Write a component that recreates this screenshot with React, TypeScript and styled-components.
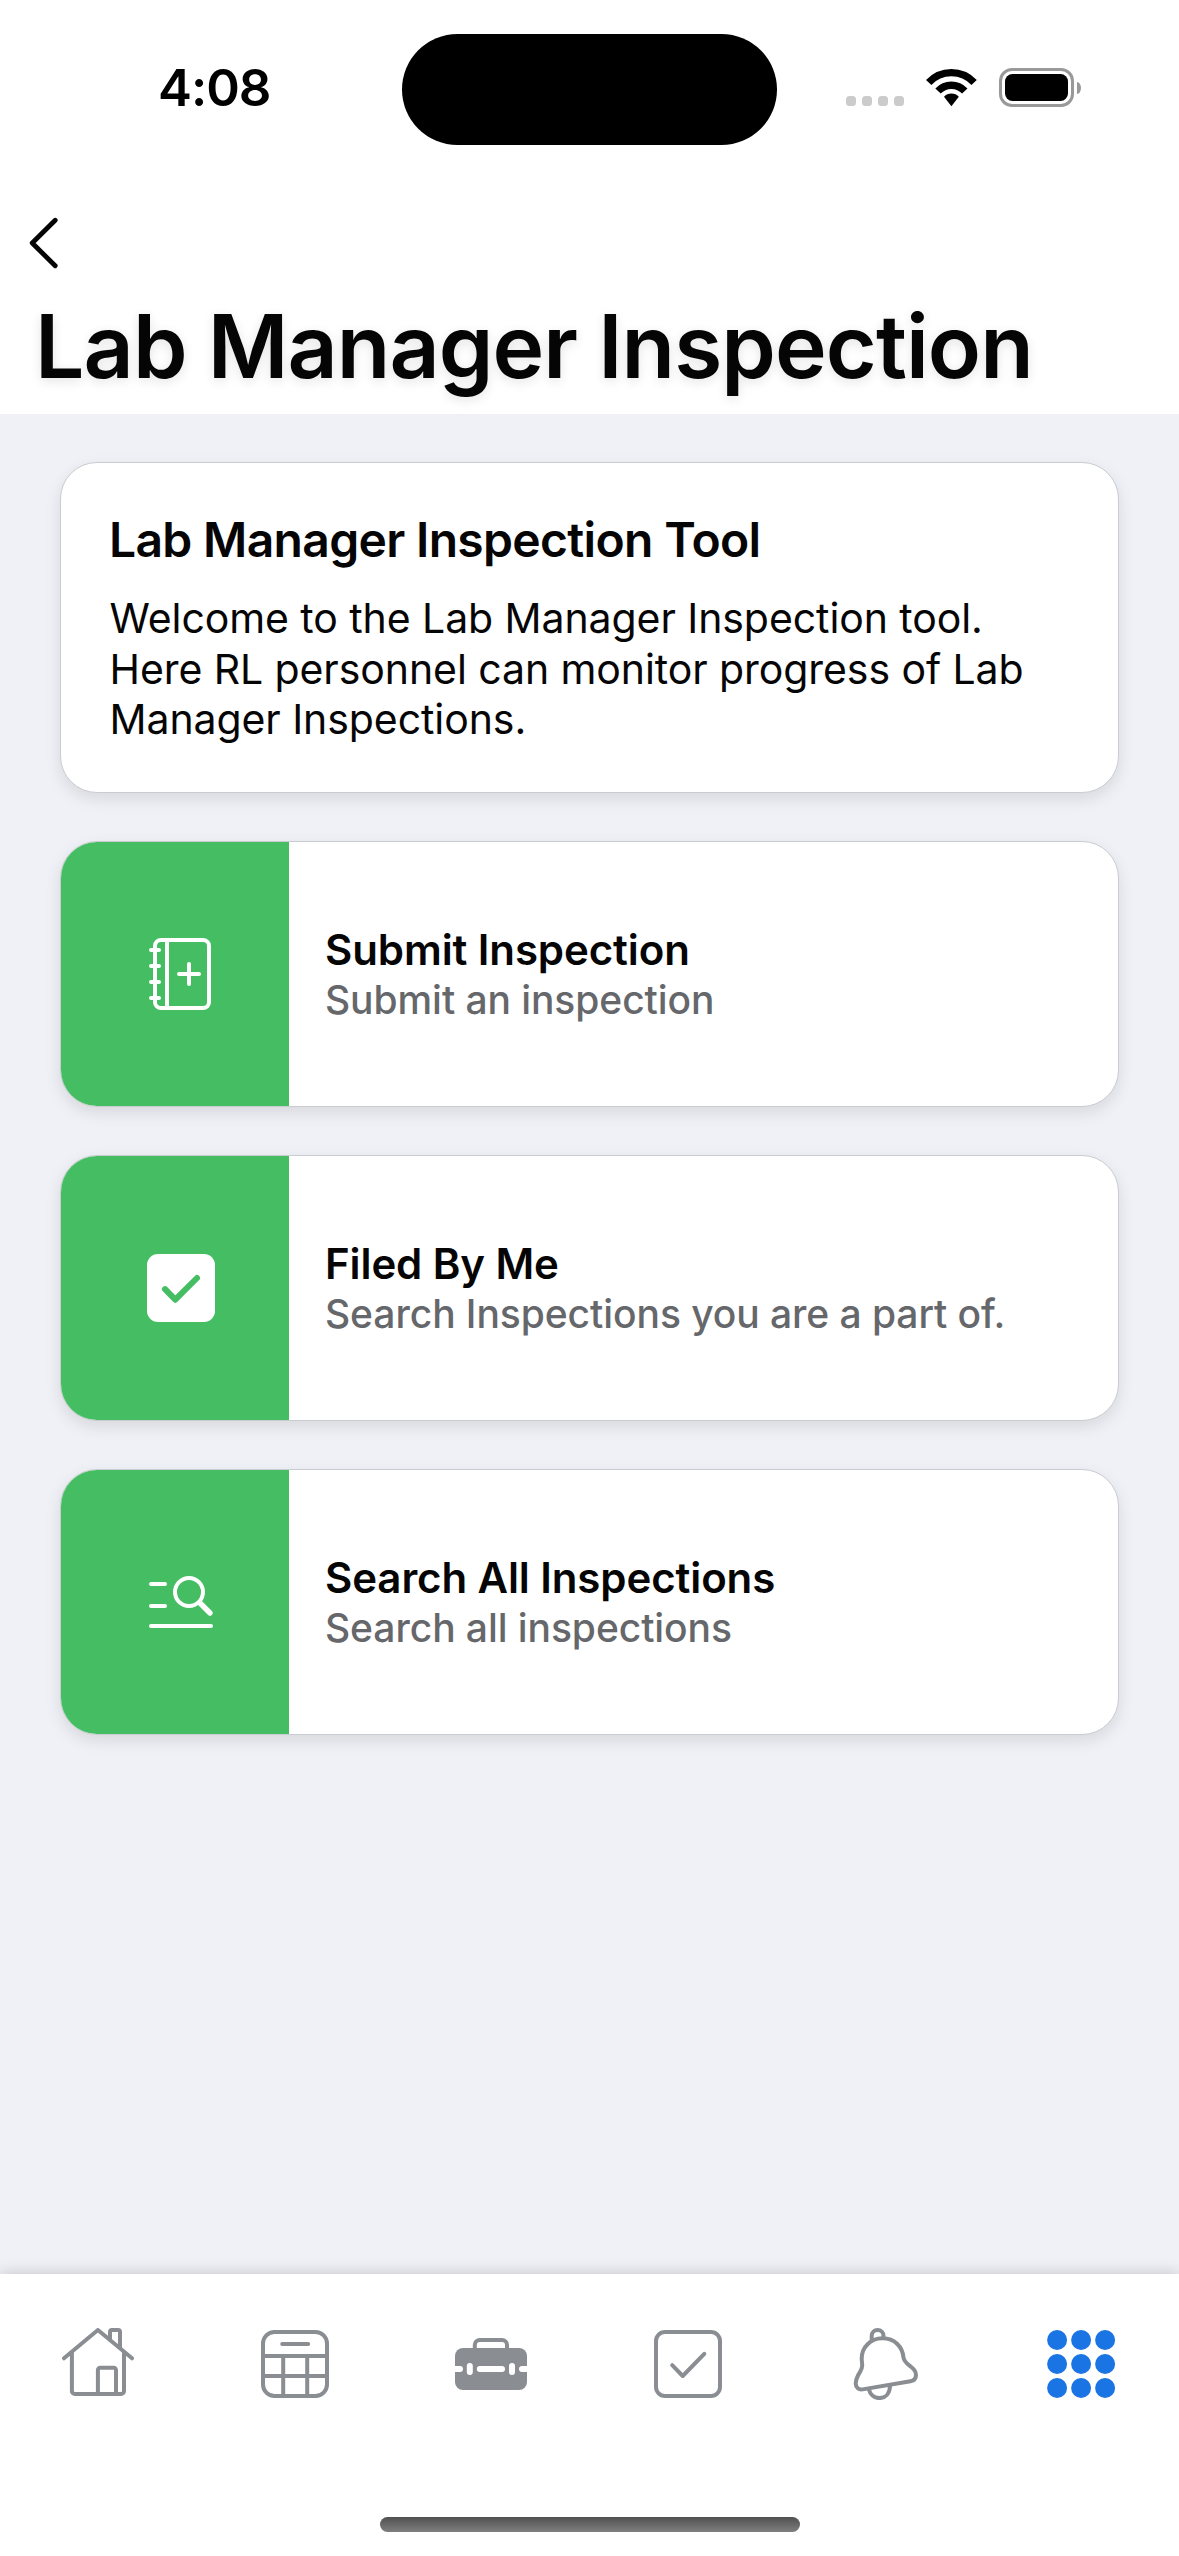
import React from "react";
import styled, { createGlobalStyle } from "styled-components";

const color = {
  ink: "#050505",
  muted: "#65676b",
  green: "#45bd62",
  gray: "#8a8d91",
  blue: "#1b74e4",
  canvas: "#f0f1f6",
  border: "#c9ccd1",
};

const GlobalStyle = createGlobalStyle`
  * { box-sizing: border-box; }
  body { margin: 0; background: #fff; }
`;

const Screen = styled.div`
  width: 1179px;
  height: 2556px;
  display: flex;
  flex-direction: column;
  overflow: hidden;
  background: ${color.canvas};
  color: ${color.ink};
  font-family: Inter, "Liberation Sans", sans-serif;
`;

/* Status bar */

const StatusBar = styled.div`
  height: 177px;
  display: grid;
  grid-template-columns: 402px 375px 1fr;
  align-items: center;
  background: #fff;
`;

const Clock = styled.div`
  padding: 0 0 1px 158px;
  font-size: 51px;
  font-weight: 600;
  line-height: 60px;
  letter-spacing: -1px;
  color: #000;
`;

const Island = styled.div`
  height: 111px;
  margin-top: 1px;
  border-radius: 56px;
  background: #000;
`;

const StatusIcons = styled.div`
  display: flex;
  align-items: center;
  gap: 22px;
  height: 39px;
  margin-bottom: 2px;
  padding-left: 69px;
`;

const SignalDots = styled.div`
  display: flex;
  gap: 6px;
  align-self: flex-end;
  margin-bottom: 1px;
`;

const SignalDot = styled.span`
  width: 10px;
  height: 10px;
  border-radius: 3.5px;
  background: #cbcbcb;
`;

const BatteryGroup = styled.div`
  display: flex;
  align-items: center;
  gap: 3px;
`;

const BatteryShell = styled.div`
  width: 75px;
  height: 39px;
  padding: 3px;
  border: 3px solid #999;
  border-radius: 13px;
`;

const BatteryLevel = styled.div`
  height: 100%;
  border-radius: 7.5px;
  background: #000;
`;

const BatteryNub = styled.div`
  width: 4px;
  height: 12px;
  border-radius: 0 4px 4px 0 / 0 6px 6px 0;
  background: #999;
`;

/* Header */

const Header = styled.header`
  background: #fff;
  height: 237px;
`;

const NavRow = styled.div`
  height: 132px;
  display: flex;
  align-items: center;
  padding-left: 28px;
`;

const BackButton = styled.button`
  display: flex;
  padding: 0;
  border: 0;
  background: none;
`;

const PageTitle = styled.h1`
  margin: 0;
  padding-left: 35px;
  font-size: 87.5px;
  font-weight: 600;
  line-height: 75px;
  letter-spacing: -0.92px;
  white-space: nowrap;
  text-shadow: 0 3px 12px rgba(0, 0, 0, 0.11);
`;

/* Content */

const Content = styled.main`
  flex: 1;
  display: flex;
  flex-direction: column;
  gap: 48px;
  padding: 48px 60px;
`;

const Card = styled.section`
  background: #fff;
  border: 1px solid ${color.border};
  border-radius: 37px;
  box-shadow: 0 6px 16px rgba(0, 0, 0, 0.1);
`;

const IntroCard = styled(Card)`
  height: 331px;
  padding: 48px;
`;

const IntroTitle = styled.h2`
  margin: 0 0 25px;
  font-size: 48px;
  font-weight: 600;
  line-height: 57px;
  letter-spacing: -0.67px;
`;

const IntroText = styled.p`
  margin: 0;
  padding-left: 0.5px;
  max-width: 940px;
  font-size: 41px;
  line-height: 50.7px;
  letter-spacing: -0.08px;
`;

const ActionCard = styled(Card)`
  display: flex;
  height: 266px;
  overflow: hidden;
`;

const ActionIcon = styled.div`
  width: 228px;
  display: flex;
  align-items: center;
  justify-content: flex-end;
  padding-right: 72px;
  background: ${color.green};
`;

const ActionBody = styled.div`
  flex: 1;
  display: flex;
  flex-direction: column;
  justify-content: center;
  padding-left: 36px;
`;

const ActionTitle = styled.div`
  font-size: 42px;
  font-weight: 600;
  line-height: 51px;
  letter-spacing: -0.1px;
`;

const ActionNote = styled.div`
  font-size: 39px;
  font-weight: 500;
  line-height: 49px;
  letter-spacing: -0.07px;
  color: ${color.muted};
`;

/* Tab bar */

const TabBar = styled.nav`
  height: 282px;
  display: flex;
  flex-direction: column;
  justify-content: space-between;
  align-items: center;
  padding: 54px 0 24px;
  background: #fff;
  box-shadow: 0 0 15px rgba(0, 0, 0, 0.2);
`;

const Tabs = styled.div`
  width: 100%;
  display: grid;
  grid-template-columns: repeat(6, 1fr);
  justify-items: center;
`;

const Tab = styled.button<{ $active?: boolean }>`
  display: flex;
  padding: 0;
  border: 0;
  background: none;
  color: ${(p) => (p.$active ? color.blue : color.gray)};
`;

const HomeIndicator = styled.div`
  width: 420px;
  height: 15px;
  border-radius: 8px;
  background: linear-gradient(#505050, #7f7f7f);
`;

/* Icons */

const Glyph = styled.svg`
  display: block;
  width: 72px;
  height: 72px;
  fill: none;
  stroke: currentColor;
  stroke-width: 4;
  stroke-linecap: round;
  stroke-linejoin: round;
`;

const WhiteGlyph = styled(Glyph)`
  color: #fff;
`;

const WifiIcon = () => (
  <svg width="51" height="39" viewBox="0 0 51 39" fill="none" stroke="#000" strokeWidth="7.3">
    <path d="M2.7 14.5A31 31 0 0 1 48.1 14.5" />
    <path d="M12 23.1A18.3 18.3 0 0 1 38.8 23.1" />
    <path d="M18 28.7A10.2 10.2 0 0 1 32.8 28.7L25.4 38.2Z" fill="#000" stroke="none" />
  </svg>
);

const BackIcon = () => (
  <svg
    width="32"
    height="52"
    viewBox="0 0 32 52"
    fill="none"
    stroke={color.ink}
    strokeWidth="4.8"
    strokeLinecap="round"
    strokeLinejoin="round"
  >
    <path d="M27.2 3.2L4.2 26L27.2 48.8" />
  </svg>
);

const NotebookIcon = () => (
  <WhiteGlyph viewBox="0 0 72 72">
    <rect x="10" y="2" width="54" height="68" rx="6" />
    <path d="M22 2V70" />
    <path d="M6 12H14M6 28H14M6 44H14M6 60H14" />
    <path d="M44 26V46M34 36H54" />
  </WhiteGlyph>
);

const CheckFilledIcon = () => (
  <WhiteGlyph viewBox="0 0 72 72">
    <rect x="2" y="2" width="68" height="68" rx="11" fill="currentColor" stroke="none" />
    <path d="M20 37.2L30.3 47.7L52 26" stroke={color.green} strokeWidth="6" />
  </WhiteGlyph>
);

const SearchListIcon = () => (
  <WhiteGlyph viewBox="0 0 72 72">
    <path d="M6 18H20M6 40H20M6 60H66" />
    <circle cx="44" cy="26" r="14" />
    <path d="M55 37L65 47" strokeWidth="5.4" />
  </WhiteGlyph>
);

const HouseIcon = () => (
  <Glyph viewBox="0 0 72 72">
    <path d="M2 30.3L35.9 2L70 30.3" />
    <path d="M9.9 25V63a3 3 0 0 0 3 3H59a3 3 0 0 0 3 -3V25" />
    <path d="M35.9 65V42a2.3 2.3 0 0 1 2.3 -2.3H51.7A2.3 2.3 0 0 1 54 42V65" />
    <path d="M48 11V4a2 2 0 0 1 2 -2H56a2 2 0 0 1 2 2V19.5" />
  </Glyph>
);

const TableIcon = () => (
  <Glyph viewBox="0 0 72 72">
    <rect x="4" y="4" width="64" height="64" rx="11.5" />
    <path d="M4 28H68M4 48H68M24.2 28V68M48.2 28V68" />
    <path d="M23.2 16H49.2" />
  </Glyph>
);

const ToolboxIcon = () => (
  <Glyph viewBox="0 0 72 72">
    <path d="M19.8 21V17a5 5 0 0 1 5 -5H47a5 5 0 0 1 5 5V21" />
    <rect x="0" y="20" width="72" height="42" rx="8" fill="currentColor" stroke="none" />
    <g stroke="#fff" strokeWidth="6">
      <path d="M-4 41H5M67 41H76M24.8 41H47" />
      <path d="M14.8 38V44M57 38V44" />
    </g>
  </Glyph>
);

const CheckSquareIcon = () => (
  <Glyph viewBox="0 0 72 72">
    <rect x="4" y="4" width="64" height="64" rx="9" />
    <path d="M20.2 37.2L30.7 48L52.3 25.8" />
  </Glyph>
);

const BellIcon = () => (
  <Glyph viewBox="0 0 72 72">
    <path d="M34.4 10.3C22.5 10.3 13.7 19.5 13.7 30.5C13.7 33 14.2 35 14.2 37.5C14.2 42 12 43.5 10 47.5C8.4 50.6 7.7 52.5 7.7 55.5C7.7 59.7 10.8 62 14.5 61.4L62.5 53.2C66 52.6 68 50.3 68 47C68 43.5 66 41.2 63 38.8C59 35.6 56 33.8 55.5 29.5C54.5 19 47 10.3 34.4 10.3Z" />
    <path d="M23.7 12.2V7.9a5.9 5.9 0 0 1 11.8 0V10" />
    <path d="M20.8 61C22 66.2 26 70.1 31.2 70.1C37.4 70.1 41.8 65.6 42 58" />
  </Glyph>
);

const GridIcon = () => (
  <Glyph viewBox="0 0 72 72">
    <g fill="currentColor" stroke="none">
      {[12, 36, 60].map((y) =>
        [12.1, 36.1, 60.1].map((x) => <circle key={`${x}-${y}`} cx={x} cy={y} r="10" />)
      )}
    </g>
  </Glyph>
);

const actions = [
  { title: "Submit Inspection", note: "Submit an inspection", Icon: NotebookIcon },
  { title: "Filed By Me", note: "Search Inspections you are a part of.", Icon: CheckFilledIcon },
  { title: "Search All Inspections", note: "Search all inspections", Icon: SearchListIcon },
];

const tabs = [
  { name: "Home", Icon: HouseIcon },
  { name: "Calendar", Icon: TableIcon },
  { name: "Tools", Icon: ToolboxIcon },
  { name: "Tasks", Icon: CheckSquareIcon },
  { name: "Notifications", Icon: BellIcon },
  { name: "Menu", Icon: GridIcon, active: true },
];

export default function App() {
  return (
    <Screen>
      <GlobalStyle />
      <StatusBar>
        <Clock>4:08</Clock>
        <Island />
        <StatusIcons>
          <SignalDots>
            <SignalDot />
            <SignalDot />
            <SignalDot />
            <SignalDot />
          </SignalDots>
          <WifiIcon />
          <BatteryGroup>
            <BatteryShell>
              <BatteryLevel />
            </BatteryShell>
            <BatteryNub />
          </BatteryGroup>
        </StatusIcons>
      </StatusBar>

      <Header>
        <NavRow>
          <BackButton aria-label="Back">
            <BackIcon />
          </BackButton>
        </NavRow>
        <PageTitle>Lab Manager Inspection</PageTitle>
      </Header>

      <Content>
        <IntroCard>
          <IntroTitle>Lab Manager Inspection Tool</IntroTitle>
          <IntroText>
            Welcome to the Lab Manager Inspection tool. Here RL personnel can monitor progress of
            Lab Manager Inspections.
          </IntroText>
        </IntroCard>
        {actions.map(({ title, note, Icon }) => (
          <ActionCard key={title}>
            <ActionIcon>
              <Icon />
            </ActionIcon>
            <ActionBody>
              <ActionTitle>{title}</ActionTitle>
              <ActionNote>{note}</ActionNote>
            </ActionBody>
          </ActionCard>
        ))}
      </Content>

      <TabBar>
        <Tabs>
          {tabs.map(({ name, Icon, active }) => (
            <Tab key={name} aria-label={name} $active={active}>
              <Icon />
            </Tab>
          ))}
        </Tabs>
        <HomeIndicator />
      </TabBar>
    </Screen>
  );
}
